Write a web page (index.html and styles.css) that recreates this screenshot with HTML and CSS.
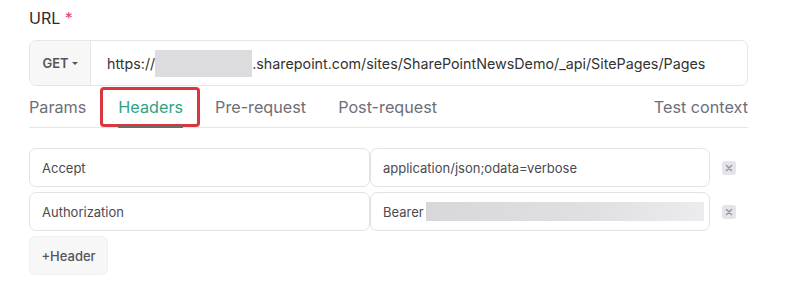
FILE: index.html
```html
<html lang="en">
<head>
    <meta charset="UTF-8">
    <title>Request</title>
    <link rel="stylesheet" href="styles.css">
</head>
<body>
    <div class="wrap">
        <div class="label">URL <span class="req">*</span></div>
        <div class="urlbar">
            <div class="method">GET <span class="caret"></span></div>
            <div class="url">https://<span class="blur"></span>.sharepoint.com/sites/SharePointNewsDemo/_api/SitePages/Pages</div>
        </div>
        <div class="tabs">
            <div class="tab">Params</div>
            <div class="tab active">Headers<span class="mark"></span></div>
            <div class="tab">Pre-request</div>
            <div class="tab">Post-request</div>
            <div class="tab right">Test context</div>
        </div>
        <div class="rows">
            <div class="row">
                <div class="field">Accept</div>
                <div class="field">application/json;odata=verbose</div>
                <div class="del"><svg width="14" height="14" viewBox="0 0 14 14"><path d="M4.5 4.5l5 5M9.5 4.5l-5 5" stroke="#9a9aa4" stroke-width="1.6" stroke-linecap="round"/></svg></div>
            </div>
            <div class="row">
                <div class="field">Authorization</div>
                <div class="field">Bearer <span class="blur2"></span></div>
                <div class="del"><svg width="14" height="14" viewBox="0 0 14 14"><path d="M4.5 4.5l5 5M9.5 4.5l-5 5" stroke="#9a9aa4" stroke-width="1.6" stroke-linecap="round"/></svg></div>
            </div>
        </div>
        <div class="add">+Header</div>
    </div>
</body>
</html>
```

FILE: styles.css
```css
body { margin: 0; background: #fff; font-family: Inter, "Noto Sans", sans-serif; color: #333; }
.wrap { width: 719px; margin-left: 29px; }
.label { margin-top: 8px; font-size: 16px; line-height: 20px; color: #2b2b30; }
.req { color: #e0457b; }

.urlbar { margin-top: 12px; height: 46px; display: flex; border: 1px solid #e6e6e9; border-radius: 7px; box-sizing: border-box; overflow: hidden; }
.method { width: 60px; background: #f7f7f8; border-right: 1px solid #e6e6e9; display: flex; align-items: center; justify-content: center; font-size: 13px; font-weight: 600; color: #555; gap: 3px; }
.caret { width: 0; height: 0; border-left: 3px solid transparent; border-right: 3px solid transparent; border-top: 3px solid #555; }
.url { flex: 1; display: flex; align-items: center; padding-left: 16px; font-size: 14.3px; color: #333; white-space: nowrap; }
.blur { display: inline-block; width: 97px; height: 27px; background: #dcdcde; }

.tabs { display: flex; height: 41px; border-bottom: 1px solid #e6e6e9; align-items: center; font-size: 16.2px; color: #6e6e76; }
.tab { margin-right: 32px; position: relative; }
.tab.active { color: #2fa384; }
.tab.right { margin-left: auto; margin-right: 0; }
.tab.active::after { content: ""; position: absolute; left: 0; right: 0; bottom: -11px; height: 2px; background: #6a6a6a; }
.mark { position: absolute; left: -18px; right: -17px; top: -10px; height: 40px; border: 3px solid #d9363e; border-radius: 4px; box-sizing: border-box; }

.rows { margin-top: 20px; display: flex; flex-direction: column; gap: 5px; }
.row { display: flex; align-items: center; }
.field { height: 39px; box-sizing: border-box; border: 1px solid #e3e3e6; border-radius: 7px; display: flex; align-items: center; padding-left: 12px; font-size: 13px; color: #4a4a52; white-space: nowrap; overflow: hidden; }
.row .field:first-child { width: 341px; }
.row .field:nth-child(2) { width: 340px; }
.blur2 { display: inline-block; width: 278px; height: 19px; margin-left: 2px; background: linear-gradient(90deg, #d8d8da, #e0e0e2 60%, #ececee); }
.del { width: 14px; height: 14px; margin-left: 12px; border-radius: 3px; background: #e4e4ea; display: flex; }

.add { margin-top: 5px; width: 79px; height: 39px; box-sizing: border-box; border: 1px solid #f0f0f2; border-radius: 6px; background: #f7f7f8; display: flex; align-items: center; justify-content: center; font-size: 13px; font-weight: 500; color: #55555d; }
```
